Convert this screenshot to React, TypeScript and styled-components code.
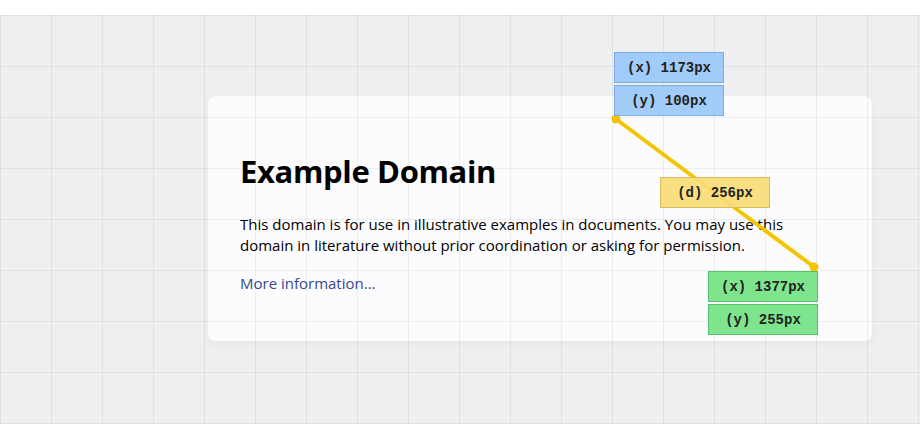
import React from "react";
import styled, { createGlobalStyle } from "styled-components";

const Global = createGlobalStyle`
  html, body { margin: 0; padding: 0; background: #ffffff; }
  body { font-family: "Open Sans", "Noto Sans", sans-serif; }
`;

const Page = styled.div`
  width: 920px;
  height: 440px;
  padding-top: 15px;
  box-sizing: border-box;
  overflow: hidden;
`;

const Canvas = styled.div`
  position: relative;
  height: 409px;
  background: #efeff1;
  padding: 81px 0 0 208px;
  box-sizing: border-box;
`;

const GridOverlay = styled.div`
  position: absolute;
  inset: 0;
  pointer-events: none;
  background-image:
    linear-gradient(to right, rgba(0, 0, 0, 0.06) 1px, transparent 1px),
    linear-gradient(to bottom, rgba(0, 0, 0, 0.06) 1px, transparent 1px);
  background-size: 51px 51px;
  background-position: 0 0;
`;

const Card = styled.div`
  width: 664px;
  height: 245px;
  box-sizing: border-box;
  background: #fcfcfe;
  border-radius: 8px;
  box-shadow: 0 3px 10px rgba(0, 0, 0, 0.04);
  padding: 57px 32px 0 32px;
  display: flex;
  flex-direction: column;
`;

const Title = styled.h1`
  margin: 0;
  font-size: 31px;
  line-height: 37px;
  font-weight: 700;
  color: #000;
  letter-spacing: -0.35px;
`;

const Text = styled.p`
  margin: 24px 0 0 0;
  width: 560px;
  font-size: 15px;
  line-height: 21px;
  color: #000;
`;

const Link = styled.a`
  margin-top: 17px;
  font-size: 15px;
  line-height: 21px;
  color: #38488f;
  text-decoration: none;
`;

const LineLayer = styled.svg`
  position: absolute;
  left: 0;
  top: 0;
  width: 920px;
  height: 409px;
  pointer-events: none;
`;

const LabelStack = styled.div<{ $x: number; $y: number }>`
  position: absolute;
  left: ${(p) => p.$x}px;
  top: ${(p) => p.$y}px;
  display: flex;
  flex-direction: column;
  gap: 2px;
`;

const tones = {
  blue: { bg: "rgba(150, 198, 248, 0.88)", border: "#7eaedf" },
  yellow: { bg: "rgba(248, 220, 118, 0.92)", border: "#d9bd5a" },
  green: { bg: "rgba(112, 226, 130, 0.9)", border: "#5bbf6b" },
};

const Label = styled.div<{ $tone: keyof typeof tones }>`
  width: 110px;
  height: 31px;
  box-sizing: border-box;
  display: flex;
  align-items: center;
  justify-content: center;
  background: ${(p) => tones[p.$tone].bg};
  border: 1px solid ${(p) => tones[p.$tone].border};
  font-family: "Liberation Mono", "DejaVu Sans Mono", monospace;
  font-weight: 700;
  font-size: 14px;
  color: #222;
  white-space: pre;
`;

export default function App() {
  return (
    <>
      <Global />
      <Page>
        <Canvas>
          <Card>
            <Title>Example Domain</Title>
            <Text>
              This domain is for use in illustrative examples in documents. You may use this
              domain in literature without prior coordination or asking for permission.
            </Text>
            <Link href="#">More information...</Link>
          </Card>
          <GridOverlay />
          <LineLayer viewBox="0 0 920 409">
            <line x1="616" y1="104" x2="814" y2="252" stroke="#f5c400" strokeWidth="4" strokeLinecap="round" />
            <circle cx="616" cy="104" r="4.5" fill="#f5c400" />
            <circle cx="814" cy="252" r="4.5" fill="#f5c400" />
          </LineLayer>
          <LabelStack $x={614} $y={37}>
            <Label $tone="blue">(x) 1173px</Label>
            <Label $tone="blue">(y) 100px</Label>
          </LabelStack>
          <LabelStack $x={660} $y={162}>
            <Label $tone="yellow">(d) 256px</Label>
          </LabelStack>
          <LabelStack $x={708} $y={256}>
            <Label $tone="green">(x) 1377px</Label>
            <Label $tone="green">(y) 255px</Label>
          </LabelStack>
        </Canvas>
      </Page>
    </>
  );
}
